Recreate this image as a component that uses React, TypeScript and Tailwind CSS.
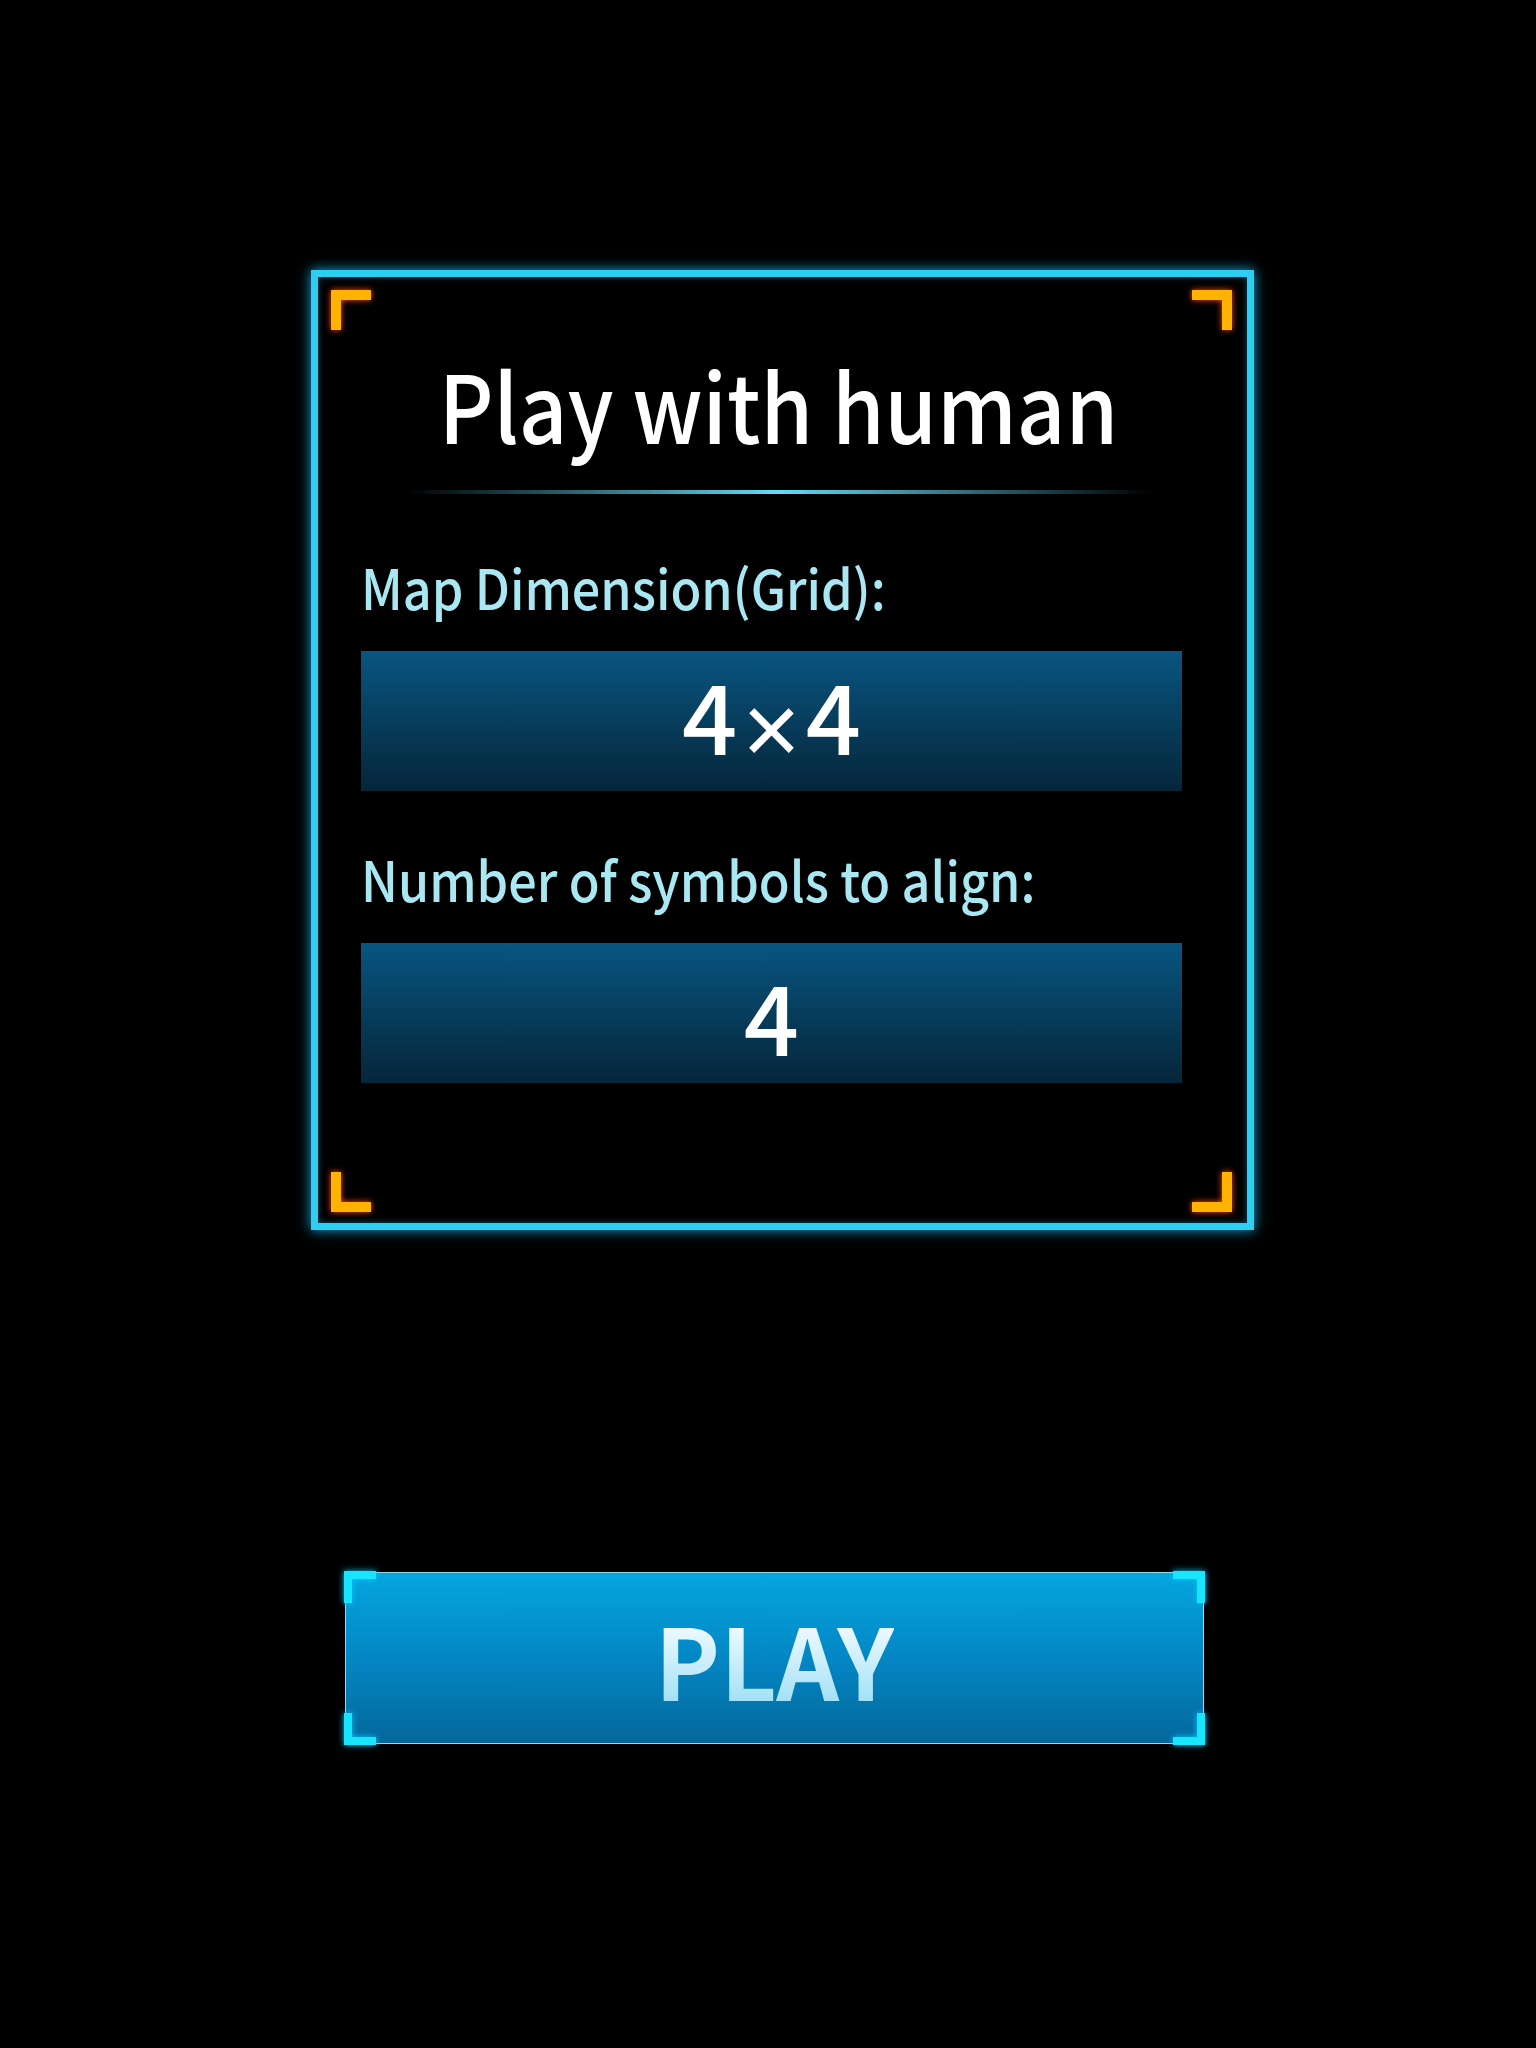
const font = { fontFamily: '"Noto Sans CJK SC", "Noto Sans", sans-serif' };

// orange L-shaped marks in the corners of the settings frame
const orange = 'absolute w-[40px] h-[40px] border-[#ffb300] drop-shadow-[0_0_3px_#ff4a00]';
// cyan brackets on the corners of the play button
const cyan = 'absolute w-[32px] h-[32px] border-[#18e6ff] drop-shadow-[0_0_3px_#00c8ff]';

const Field = ({ label, children }: { label: string; children: React.ReactNode }) => (
	<div className="flex flex-col gap-[37px]">
		<p className="text-[55px] leading-none font-medium text-[#a9e8f3] scale-x-[0.915] origin-left">{label}</p>
		<div className="w-[821px] h-[140px] flex items-center justify-center bg-gradient-to-b from-[#075682] to-[#05263a]">
			<span className="text-[97px] leading-none font-medium text-white">{children}</span>
		</div>
	</div>
);

export default function App() {
	return (
		<div className="min-h-[2048px] w-full bg-black" style={font}>
			<div className="pt-[270px] pl-[311px] flex flex-col items-start gap-[342px]">
				<section className="relative w-[943px] h-[960px] border-[7px] border-[#2ccff1] shadow-[0_0_12px_#17a9dc,inset_0_0_6px_rgba(23,169,220,0.5)] flex flex-col pt-[79px] pl-[43px]">
					<div className={`${orange} left-[13px] top-[13px] border-t-[10px] border-l-[10px]`} />
					<div className={`${orange} right-[15px] top-[13px] border-t-[10px] border-r-[10px]`} />
					<div className={`${orange} left-[13px] bottom-[11px] border-b-[10px] border-l-[10px]`} />
					<div className={`${orange} right-[15px] bottom-[11px] border-b-[10px] border-r-[10px]`} />

					<div className="w-[835px] flex flex-col items-center">
						<h1 className="text-[94px] leading-none font-medium text-white scale-x-[0.9]">Play with human</h1>
						<div className="mt-[40px] w-[745px] h-[4px] bg-gradient-to-r from-transparent via-[#62dcf8] to-transparent blur-[0.5px]" />
					</div>

					<div className="mt-[65px] flex flex-col gap-[60px]">
						<Field label="Map Dimension(Grid):">
							4
							<span className="px-[5px] text-[100px] font-normal align-[-9px]" style={{ fontFamily: '"Liberation Sans", sans-serif' }}>
								×
							</span>
							4
						</Field>
						<Field label="Number of symbols to align:">4</Field>
					</div>
				</section>

				<button className="relative ml-[34px] w-[859px] h-[172px] flex items-center justify-center border border-[#8fdcf2] bg-gradient-to-b from-[#05a6e0] via-[#0387c4] to-[#04679b]">
					<span className={`${cyan} -left-[2px] -top-[2px] border-t-[8px] border-l-[8px]`} />
					<span className={`${cyan} -right-[2px] -top-[2px] border-t-[8px] border-r-[8px]`} />
					<span className={`${cyan} -left-[2px] -bottom-[2px] border-b-[8px] border-l-[8px]`} />
					<span className={`${cyan} -right-[2px] -bottom-[2px] border-b-[8px] border-r-[8px]`} />
					<span className="text-[98px] leading-none font-bold bg-gradient-to-b from-white to-[#9cdff6] bg-clip-text text-transparent">PLAY</span>
				</button>
			</div>
		</div>
	);
}
